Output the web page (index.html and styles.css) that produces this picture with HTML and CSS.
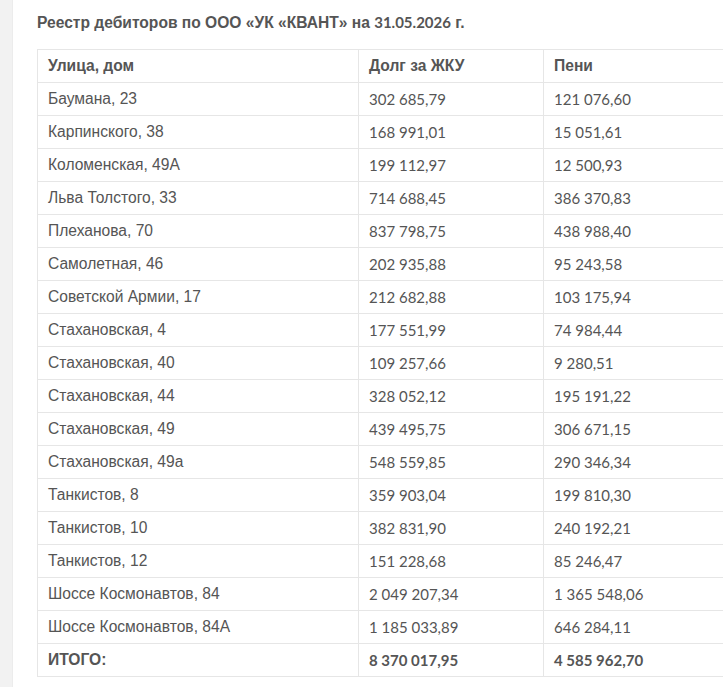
FILE: index.html
```html
<!DOCTYPE html>
<html lang="ru">
<head>
<meta charset="utf-8">
<title>Реестр дебиторов</title>
<link rel="stylesheet" href="styles.css">
</head>
<body>
<div class="page">
  <div class="side"></div>
  <main class="content">
    <h1 class="title">Реестр дебиторов по ООО «УК «КВАНТ» на <span class="num">31.05.2026</span> г.</h1>
    <table class="debts">
      <colgroup>
        <col class="c1"><col class="c2"><col class="c3">
      </colgroup>
      <thead>
        <tr><th>Улица, дом</th><th>Долг за ЖКУ</th><th>Пени</th></tr>
      </thead>
      <tbody>
        <tr><td>Баумана, 23</td><td>302 685,79</td><td>121 076,60</td></tr>
        <tr><td>Карпинского, 38</td><td>168 991,01</td><td>15 051,61</td></tr>
        <tr><td>Коломенская, 49А</td><td>199 112,97</td><td>12 500,93</td></tr>
        <tr><td>Льва Толстого, 33</td><td>714 688,45</td><td>386 370,83</td></tr>
        <tr><td>Плеханова, 70</td><td>837 798,75</td><td>438 988,40</td></tr>
        <tr><td>Самолетная, 46</td><td>202 935,88</td><td>95 243,58</td></tr>
        <tr><td>Советской Армии, 17</td><td>212 682,88</td><td>103 175,94</td></tr>
        <tr><td>Стахановская, 4</td><td>177 551,99</td><td>74 984,44</td></tr>
        <tr><td>Стахановская, 40</td><td>109 257,66</td><td>9 280,51</td></tr>
        <tr><td>Стахановская, 44</td><td>328 052,12</td><td>195 191,22</td></tr>
        <tr><td>Стахановская, 49</td><td>439 495,75</td><td>306 671,15</td></tr>
        <tr><td>Стахановская, 49а</td><td>548 559,85</td><td>290 346,34</td></tr>
        <tr><td>Танкистов, 8</td><td>359 903,04</td><td>199 810,30</td></tr>
        <tr><td>Танкистов, 10</td><td>382 831,90</td><td>240 192,21</td></tr>
        <tr><td>Танкистов, 12</td><td>151 228,68</td><td>85 246,47</td></tr>
        <tr><td>Шоссе Космонавтов, 84</td><td>2 049 207,34</td><td>1 365 548,06</td></tr>
        <tr><td>Шоссе Космонавтов, 84А</td><td>1 185 033,89</td><td>646 284,11</td></tr>
        <tr class="total"><td>ИТОГО:</td><td>8 370 017,95</td><td>4 585 962,70</td></tr>
      </tbody>
    </table>
  </main>
</div>
</body>
</html>
```

FILE: styles.css
```css
html, body {
  margin: 0;
  padding: 0;
  background: #ffffff;
}
body {
  font-family: "Liberation Sans", Arial, sans-serif;
  color: #555555;
  overflow: hidden;
}
.page {
  display: flex;
  width: 723px;
  height: 687px;
  overflow: hidden;
}
.side {
  flex: 0 0 12px;
  background: #f2f2f2;
  border-right: 1px solid #ececec;
}
.content {
  flex: 1 0 auto;
  padding: 12px 0 0 24px;
  overflow: hidden;
}
.title {
  margin: 0 0 16px 0;
  font-size: 15.6px;
  font-weight: 700;
  line-height: 20px;
  color: #555555;
}
.num {
  font-family: Lato, "Open Sans", sans-serif;
  font-size: 15px;
}
.debts {
  border-collapse: collapse;
  table-layout: fixed;
  width: 760px;
  font-size: 15.6px;
}
.c1 { width: 321px; }
.c2 { width: 185px; }
.c3 { width: 254px; }
.debts th, .debts td {
  border: 1px solid #e6e6e6;
  height: 32px;
  padding: 0 10px;
  text-align: left;
  vertical-align: middle;
  line-height: 20px;
  white-space: nowrap;
}
.debts td + td {
  font-family: Lato, "Open Sans", sans-serif;
  font-size: 15px;
}
.debts th {
  font-weight: 700;
}
.debts .total td {
  font-weight: 700;
}
```
